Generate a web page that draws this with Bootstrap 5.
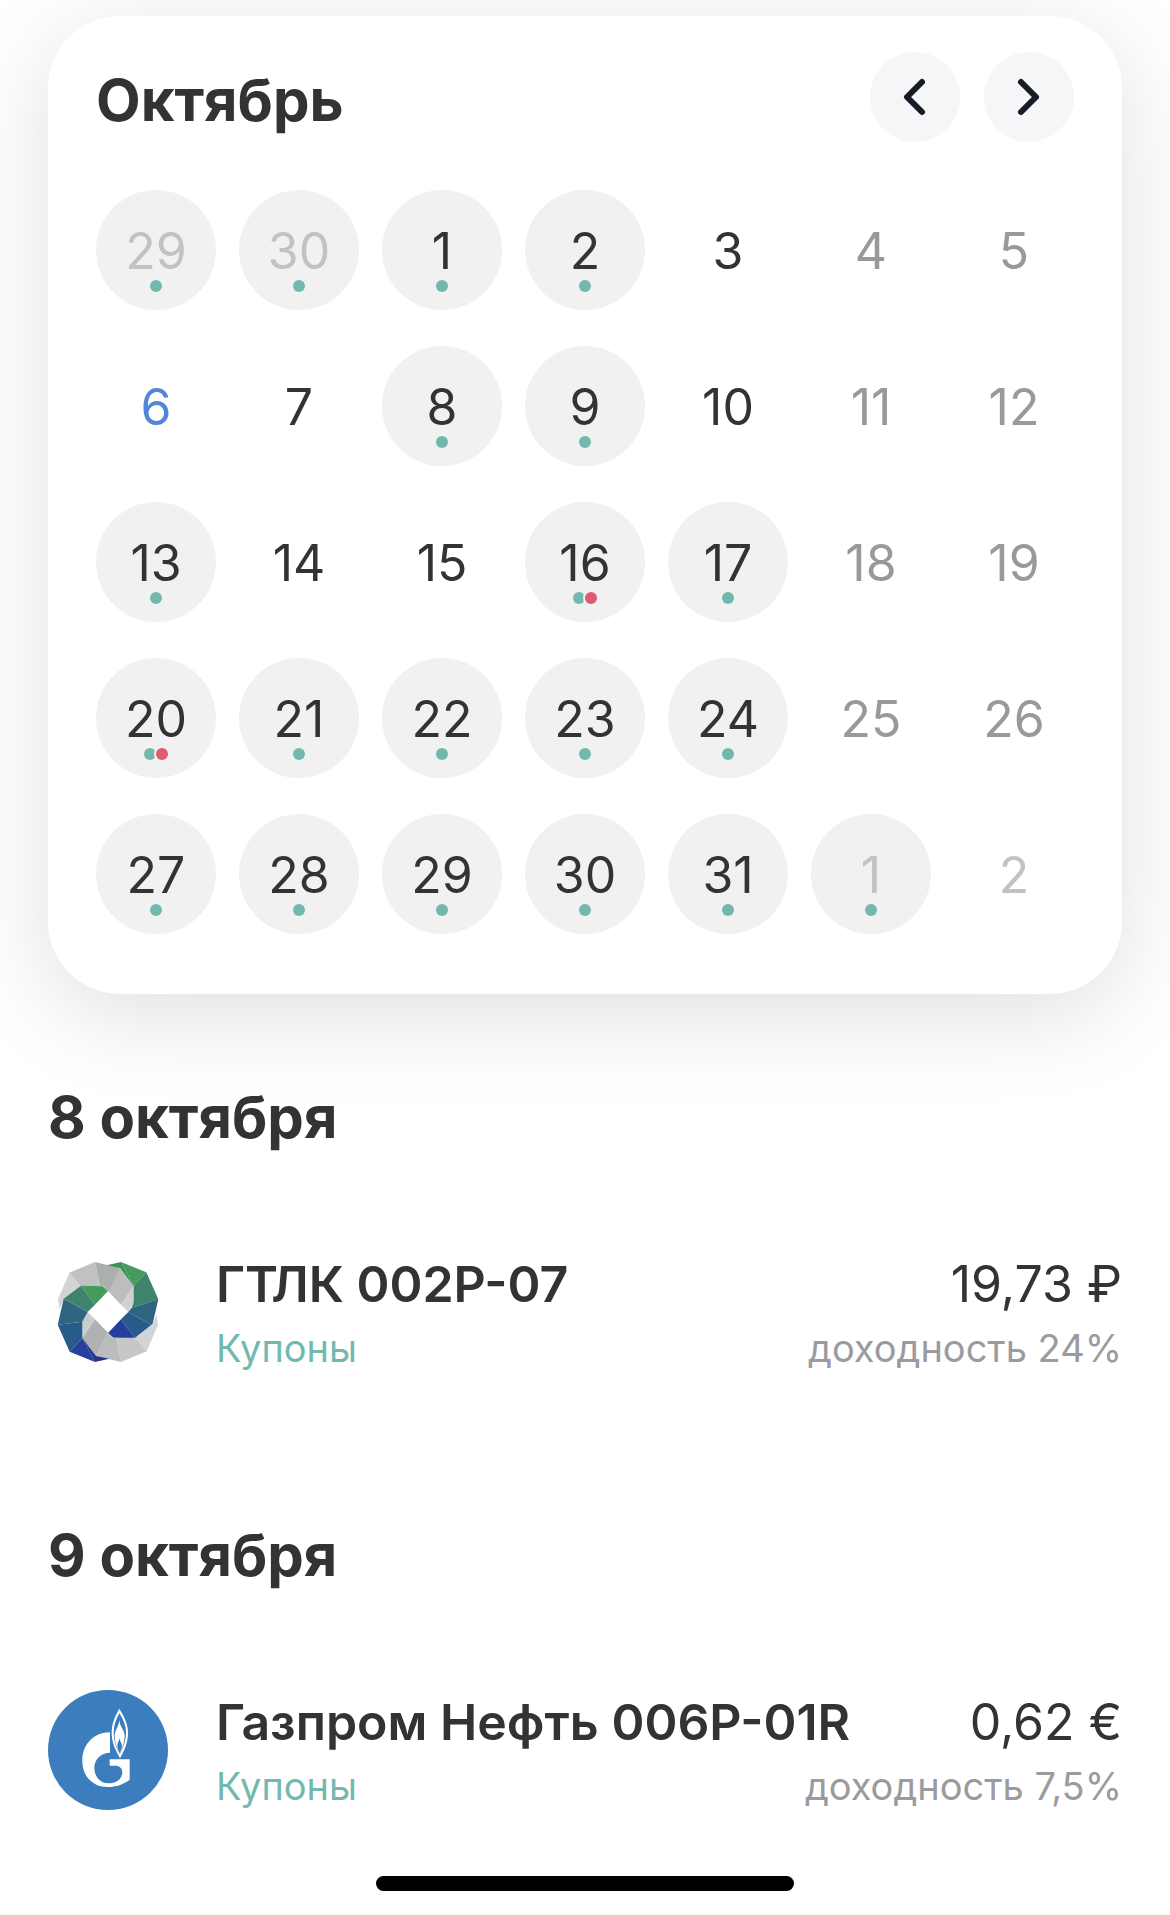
<!DOCTYPE html>
<html lang="ru">
<head>
<meta charset="utf-8">
<meta name="viewport" content="width=device-width, initial-scale=1">
<title>Календарь выплат</title>
<link href="https://cdn.jsdelivr.net/npm/bootstrap@5.3.0/dist/css/bootstrap.min.css" rel="stylesheet">
<style>
  body { font-family: Inter, "Noto Sans", sans-serif; color: #333; background: #fff; }
  .screen { padding: 16px 48px 20px; }
  .calendar { border-radius: 72px; padding: 36px 48px 60px; box-shadow: 0 20px 96px rgba(0, 0, 0, .13); }
  .heading { font-size: 58px; line-height: 72px; font-weight: 700; margin: 0; }
  .month { padding-top: 6px; }
  .round-btn { width: 90px; height: 90px; border-radius: 50%; background: #f6f6f9; }
  .days { display: grid; grid-template-columns: repeat(7, 1fr); gap: 36px 23px; margin-top: 48px; }
  .day { position: relative; aspect-ratio: 1; border: 0; border-radius: 50%; padding: 2px 0 0; background: transparent; color: #333; font-size: 50px; line-height: 60px; }
  .day.busy { background: #f1f1f1; }
  .day.weekend { color: #97999c; }
  .day.other { color: #c1c2c4; }
  .day.today { color: #5186d8; }
  .dots { position: absolute; left: 0; right: 0; bottom: 18px; }
  .dots i { width: 12px; height: 12px; border-radius: 50%; background: #73b8af; }
  .dots i.red { background: #dd5c70; box-shadow: 0 0 0 2px #f1f1f1; }
  .day-title { margin-top: 87px; }
  .event { margin-top: 99px; gap: 48px; }
  .logo { width: 120px; height: 120px; flex: none; }
  .event-main { font-size: 50px; line-height: 64px; }
  .event-sub { font-size: 38px; line-height: 48px; margin-top: 8px; }
  .coupon { color: #73b8af; }
  .yield { color: #9a9b9f; }
  .event + .day-title { margin-top: 147px; }
  .home-bar { width: 39%; height: 15px; border-radius: 8px; margin-top: 66px; }
</style>
<script src="https://cdn.jsdelivr.net/npm/bootstrap@5.3.0/dist/js/bootstrap.bundle.min.js"></script>
</head>
<body>
<main class="screen">
  <section class="calendar bg-white">
    <header class="d-flex justify-content-between align-items-center">
      <h1 class="heading month">Октябрь</h1>
      <div class="d-flex gap-4">
        <button type="button" class="btn round-btn p-0 border-0" aria-label="Предыдущий месяц">
          <svg class="d-block" width="90" height="90" viewBox="0 0 90 90" fill="none" stroke="#151c28" stroke-width="6" stroke-linecap="round" stroke-linejoin="round"><path d="M52 30L37 45l15 15"/></svg>
        </button>
        <button type="button" class="btn round-btn p-0 border-0" aria-label="Следующий месяц">
          <svg class="d-block" width="90" height="90" viewBox="0 0 90 90" fill="none" stroke="#151c28" stroke-width="6" stroke-linecap="round" stroke-linejoin="round"><path d="M37 30l15 15-15 15"/></svg>
        </button>
      </div>
    </header>
    <div class="days">
      <button type="button" class="day busy other">29<span class="dots d-flex justify-content-center"><i></i></span></button>
      <button type="button" class="day busy other">30<span class="dots d-flex justify-content-center"><i></i></span></button>
      <button type="button" class="day busy">1<span class="dots d-flex justify-content-center"><i></i></span></button>
      <button type="button" class="day busy">2<span class="dots d-flex justify-content-center"><i></i></span></button>
      <button type="button" class="day">3</button>
      <button type="button" class="day weekend">4</button>
      <button type="button" class="day weekend">5</button>

      <button type="button" class="day today">6</button>
      <button type="button" class="day">7</button>
      <button type="button" class="day busy">8<span class="dots d-flex justify-content-center"><i></i></span></button>
      <button type="button" class="day busy">9<span class="dots d-flex justify-content-center"><i></i></span></button>
      <button type="button" class="day">10</button>
      <button type="button" class="day weekend">11</button>
      <button type="button" class="day weekend">12</button>

      <button type="button" class="day busy">13<span class="dots d-flex justify-content-center"><i></i></span></button>
      <button type="button" class="day">14</button>
      <button type="button" class="day">15</button>
      <button type="button" class="day busy">16<span class="dots d-flex justify-content-center"><i></i><i class="red"></i></span></button>
      <button type="button" class="day busy">17<span class="dots d-flex justify-content-center"><i></i></span></button>
      <button type="button" class="day weekend">18</button>
      <button type="button" class="day weekend">19</button>

      <button type="button" class="day busy">20<span class="dots d-flex justify-content-center"><i></i><i class="red"></i></span></button>
      <button type="button" class="day busy">21<span class="dots d-flex justify-content-center"><i></i></span></button>
      <button type="button" class="day busy">22<span class="dots d-flex justify-content-center"><i></i></span></button>
      <button type="button" class="day busy">23<span class="dots d-flex justify-content-center"><i></i></span></button>
      <button type="button" class="day busy">24<span class="dots d-flex justify-content-center"><i></i></span></button>
      <button type="button" class="day weekend">25</button>
      <button type="button" class="day weekend">26</button>

      <button type="button" class="day busy">27<span class="dots d-flex justify-content-center"><i></i></span></button>
      <button type="button" class="day busy">28<span class="dots d-flex justify-content-center"><i></i></span></button>
      <button type="button" class="day busy">29<span class="dots d-flex justify-content-center"><i></i></span></button>
      <button type="button" class="day busy">30<span class="dots d-flex justify-content-center"><i></i></span></button>
      <button type="button" class="day busy">31<span class="dots d-flex justify-content-center"><i></i></span></button>
      <button type="button" class="day busy other">1<span class="dots d-flex justify-content-center"><i></i></span></button>
      <button type="button" class="day other">2</button>
    </div>
  </section>

  <h2 class="heading day-title">8 октября</h2>
  <article class="event d-flex align-items-center">
    <svg class="logo" viewBox="24 36 360 360" aria-hidden="true">
      <g>
        <path fill="#d3d4d6" d="M54 178L88 98L123 139L70 181L58 208z"/>
        <path fill="#c0c1c3" d="M88 98L165 66L180 139L123 139z"/>
        <path fill="#adaeb0" d="M165 66L240 84L225 150L206 155L190 139L180 139z"/>
        <path fill="#bcbdbf" d="M240 84L281 138L243 194L206 155z"/>
        <path fill="#d0d1d3" d="M281 138L281 187L265 216L243 194z"/>
        <path fill="#3c9155" d="M200 76L243 66L281 138L240 84z"/>
        <path fill="#459b5a" d="M243 66L319 97L281 138z"/>
        <path fill="#3f836f" d="M319 97L355 178L275 203L281 187L281 138z"/>
        <path fill="#2e6681" d="M355 178L337 256L265 216L275 203z"/>
        <path fill="#285a8a" d="M337 256L285 295L243 238L265 216z"/>
        <path fill="#233f9b" d="M285 295L220 293L204 279L243 238z"/>
      </g>
      <g transform="rotate(180 204 216)">
        <path fill="#d3d4d6" d="M54 178L88 98L123 139L70 181L58 208z"/>
        <path fill="#c6c7c9" d="M88 98L165 66L180 139L123 139z"/>
        <path fill="#bbbcbe" d="M165 66L240 84L204 154L190 139L180 139z"/>
        <path fill="#b0b1b3" d="M240 84L281 138L243 194L204 154z"/>
        <path fill="#cbccce" d="M281 138L281 187L265 216L243 194z"/>
        <path fill="#233785" d="M200 76L243 66L281 138L240 84z"/>
        <path fill="#263f9b" d="M243 66L319 97L281 138z"/>
        <path fill="#285a8a" d="M319 97L355 178L281 187L281 138z"/>
        <path fill="#2e6681" d="M355 178L337 256L265 216L281 187z"/>
        <path fill="#3f836f" d="M337 256L285 295L243 238L265 216z"/>
        <path fill="#459b5a" d="M285 295L220 293L204 279L243 238z"/>
      </g>
    </svg>
    <div class="flex-grow-1">
      <div class="event-main d-flex justify-content-between"><span class="fw-semibold">ГТЛК 002P-07</span><span>19,73 ₽</span></div>
      <div class="event-sub d-flex justify-content-between"><span class="coupon">Купоны</span><span class="yield">доходность 24%</span></div>
    </div>
  </article>

  <h2 class="heading day-title">9 октября</h2>
  <article class="event d-flex align-items-center">
    <svg class="logo" viewBox="24 30 360 360" aria-hidden="true">
      <circle cx="204" cy="210" r="180" fill="#3b7dbd"/>
      <path fill="#fff" d="M210 157v61c-27 0-47 20-47 45 0 27 18 47 42 47 25 0 42-14 42-33 0-13-9-20-21-20h-17v-19h60v61c-18 14-40 22-66 22-44 0-76-31-76-79 0-50 35-85 83-85z"/>
      <path fill="#fff" d="M238 86c16 26 26 47 26 73 0 27-9 49-24 76-15-27-25-49-25-76 0-26 8-47 23-73z"/>
      <path fill="#3b7dbd" d="M238 99c-11 20-17 38-17 59 0 23 7 43 18 65 11-22 19-42 19-65 0-21-7-39-20-59z"/>
      <path fill="#fff" d="M238 120c-1 20-14 30-14 48 0 19 7 35 15 54 8-19 15-35 15-54 0-18-15-28-16-48z"/>
      <path fill="#3b7dbd" d="M238 175c-1 9-6 14-6 22 0 7 3 14 7 23 4-9 7-16 7-23 0-8-7-13-8-22z"/>
    </svg>
    <div class="flex-grow-1">
      <div class="event-main d-flex justify-content-between"><span class="fw-semibold">Газпром Нефть 006P-01R</span><span>0,62 €</span></div>
      <div class="event-sub d-flex justify-content-between"><span class="coupon">Купоны</span><span class="yield">доходность 7,5%</span></div>
    </div>
  </article>
  <div class="home-bar bg-black mx-auto"></div>
</main>
</body>
</html>
